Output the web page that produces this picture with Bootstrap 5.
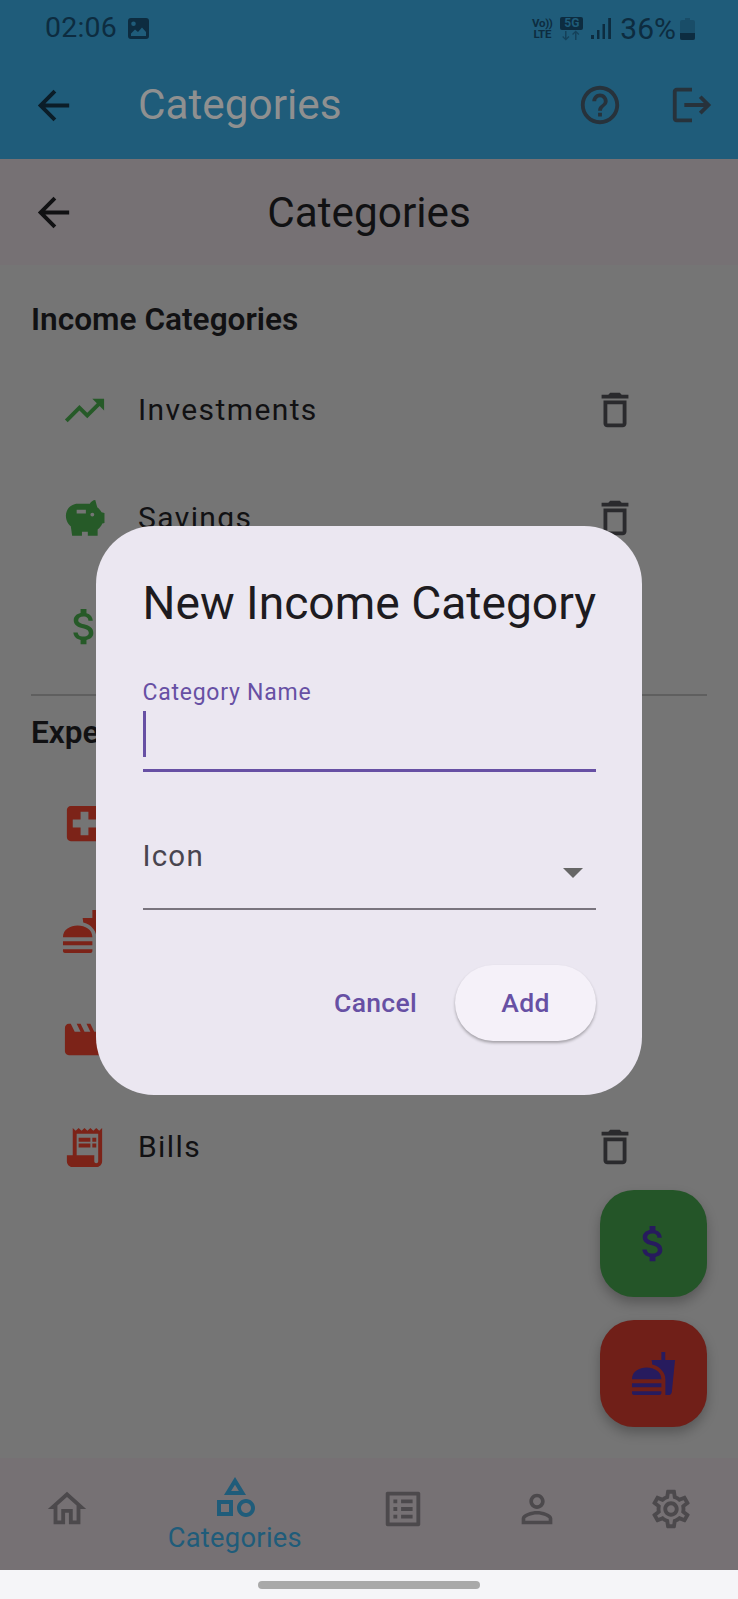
<!DOCTYPE html>
<html lang="en">
<head>
  <meta charset="UTF-8" />
  <meta name="viewport" content="width=device-width, initial-scale=1.0"/>
  <title>Categories</title>
  <link href="https://cdn.jsdelivr.net/npm/bootstrap@5.3.0/dist/css/bootstrap.min.css" rel="stylesheet" />
  <style>
    body { margin: 0; background: #757575; font-family: Roboto, "Noto Sans", sans-serif; }
    svg { fill: currentColor; display: block; flex: none; }
    .phone { width: 738px; height: 1599px; position: relative; overflow: hidden; background: #757575; color: #111113; }

    .app-top { height: 159px; background: #1f5c7a; color: #0b1d28; }
    .status-row { height: 57px; padding: 0 43px 0 45px; color: #0d2c40; }
    .status-time { font-size: 28.5px; line-height: 1; letter-spacing: .2px; }
    .status-img { margin-left: 11px; }
    .status-pct { font-size: 30px; line-height: 1; margin-left: 9px; }
    .volte { font-size: 11.5px; line-height: 11px; font-weight: 700; width: 22px; letter-spacing: -.3px; }
    .five-g { width: 23px; margin-left: 7px; }
    .five-g span { display: block; background: #0d2c40; color: #1f5c7a; font-size: 12px; line-height: 13px; font-weight: 700; text-align: center; border-radius: 2px; }
    .tool-row { height: 102px; padding: 0 0 6px 31px; }
    .top-title { font-size: 42.3px; line-height: 1; color: #8f9090; margin-left: 61px; margin-top: 1px; }
    .tool-ico { color: #27323b; }
    .arrow-ico { margin-left: -1px; }
    .help-ico { margin-left: auto; margin-right: 1px; }
    .logout-ico { margin: 0 23px 0 45px; }

    .sub-bar { height: 106px; background: #767174; padding-left: 31px; position: relative; }
    .sub-title { font-size: 42.3px; line-height: 1; position: absolute; left: 0; right: 0; text-align: center; padding-top: 2px; }

    .cat-list { padding: 36px 31px 0; }
    .cat-head { font-size: 31.6px; line-height: 38px; font-weight: 600; margin-bottom: 17px; white-space: nowrap; }
    .cat-row { height: 108px; padding: 0 69px 0 30px; }
    .cat-name { font-size: 30px; line-height: 1; letter-spacing: 1.4px; margin-left: 30px; color: #111113; }
    .cat-bin { color: #2a2a2d; margin-left: auto; }
    .inc { color: #265a28; }
    .exp { color: #7c2318; }
    .cat-rule { height: 2px; background: #5f5f5f; margin: 14px 0 18px; }

    .fab-stack { position: absolute; left: 600px; top: 1190px; }
    .fab-btn { width: 107px; height: 107px; border-radius: 34px; margin-bottom: 23px; color: #271b5e; box-shadow: 0 6px 12px rgba(0,0,0,.25); }
    .fab-green { background: #245528; }
    .fab-red { background: #701f18; }

    .bot-nav { height: 112px; background: #767174; color: #4c494c; }
    .nav-cell { flex: 2 1 0; height: 100%; padding-top: 28px; }
    .nav-cell.on { flex: 3 1 0; padding-top: 15px; color: #1f5c7a; }
    .nav-label { font-size: 27.3px; line-height: 32px; letter-spacing: .3px; margin-top: 1px; }
    .home-strip { height: 29px; background: #f5f5f8; padding-top: 11px; }
    .home-pill { width: 222px; height: 8px; border-radius: 4px; background: #a9a9a9; }

    .new-dialog { position: absolute; left: 96px; top: 526px; width: 546px; height: 569px; background: #ebe7f1; border-radius: 58px; padding: 46px 46px 0 46.500px; }
    .dlg-title { font-size: 46.2px; line-height: 62px; color: #1d1b20; white-space: nowrap; }
    .field-label { font-size: 23px; line-height: 28px; letter-spacing: .75px; color: #6750a4; margin-top: 45px; }
    .field-line { height: 65px; border-bottom: 3.5px solid #6750a4; padding-top: 4px; }
    .caret-bar { width: 3px; height: 46px; background: #6750a4; }
    .select-line { height: 138px; border-bottom: 2px solid #79747e; color: #49454f; position: relative; padding-top: 66px; }
    .select-label { font-size: 29.5px; line-height: 36px; letter-spacing: 1.2px; }
    .select-arrow { position: absolute; right: 13px; top: 96px; width: 0; height: 0; border-left: 10px solid transparent; border-right: 10px solid transparent; border-top: 10px solid #666; }
    .dlg-actions { margin-top: 55px; }
    .act-btn { font-size: 26.5px; font-weight: 500; color: #6750a4; height: 76px; border: 0; background: none; padding: 0; letter-spacing: .3px; }
    .act-add { width: 141px; border-radius: 38px; background: #f5f1f9; margin-left: 38px; box-shadow: 0 2px 3px rgba(0,0,0,.3); }
  </style>
</head>
<body>
  <svg width="0" height="0" class="position-absolute">
    <symbol id="i-back" viewBox="0 0 24 24"><path d="M20 11H7.83l5.59-5.59L12 4l-8 8 8 8 1.41-1.41L7.83 13H20v-2z"/></symbol>
    <symbol id="i-help" viewBox="0 0 24 24"><path d="M11 18h2v-2h-2v2zm1-16C6.48 2 2 6.48 2 12s4.48 10 10 10 10-4.48 10-10S17.52 2 12 2zm0 18c-4.41 0-8-3.59-8-8s3.59-8 8-8 8 3.59 8 8-3.59 8-8 8zm0-14c-2.21 0-4 1.79-4 4h2c0-1.1.9-2 2-2s2 .9 2 2c0 2-3 1.75-3 5h2c0-2.25 3-2.5 3-5 0-2.21-1.79-4-4-4z"/></symbol>
    <symbol id="i-logout" viewBox="0 0 24 24"><path d="M17 7l-1.41 1.41L18.17 11H8v2h10.17l-2.58 2.58L17 17l5-5zM4 5h8V3H4c-1.1 0-2 .9-2 2v14c0 1.1.9 2 2 2h8v-2H4V5z"/></symbol>
    <symbol id="i-bin" viewBox="0 0 24 24"><path d="M6 19c0 1.1.9 2 2 2h8c1.1 0 2-.9 2-2V7H6v12zM8 9h8v10H8V9zm7.5-5l-1-1h-5l-1 1H5v2h14V4h-3.5z"/></symbol>
    <symbol id="i-trend" viewBox="0 0 24 24"><path d="M16 6l2.29 2.29-4.88 4.88-4-4L2 16.59 3.41 18l6-6 4 4 6.3-6.29L22 12V6z"/></symbol>
    <symbol id="i-pig" viewBox="0 0 24 24"><path fill-rule="evenodd" d="M17.500 2.500c-1.200.1-2.200.8-2.800 2H8.500C5.500 4.500 2.500 7 2.500 10.500c0 2.800 1.300 4.500 2.500 5.500l.7 4.800h5v-2h3v2h5v-3.200c1.100-.8 1.900-1.800 2.400-3l1.100-.3V9.200l-1.500-.4c-.5-1-1.300-1.900-2.200-2.500zM8 7.500h4.700v2H8zM16 9a1 1 0 1 1 0 2 1 1 0 0 1 0-2z"/></symbol>
    <symbol id="i-dollar" viewBox="0 0 24 24"><path d="M11.8 10.9c-2.27-.59-3-1.2-3-2.15 0-1.09 1.01-1.85 2.7-1.85 1.78 0 2.44.85 2.5 2.1h2.21c-.07-1.72-1.12-3.3-3.21-3.81V3h-3v2.16c-1.94.42-3.5 1.68-3.5 3.61 0 2.31 1.91 3.46 4.7 4.13 2.5.6 3 1.48 3 2.41 0 .69-.49 1.79-2.7 1.79-2.06 0-2.87-.92-2.98-2.1h-2.2c.12 2.19 1.76 3.42 3.68 3.83V21h3v-2.15c1.95-.37 3.5-1.5 3.5-3.55 0-2.84-2.43-3.81-4.7-4.4z"/></symbol>
    <symbol id="i-hospital" viewBox="0 0 24 24"><path d="M19 3H5c-1.1 0-1.99.9-1.99 2L3 19c0 1.1.9 2 2 2h14c1.1 0 2-.9 2-2V5c0-1.1-.9-2-2-2zm-1 11h-4v4h-4v-4H6v-4h4V6h4v4h4v4z"/></symbol>
    <symbol id="i-food" viewBox="0 0 24 24"><path d="M18.06 22.99h1.66c.84 0 1.53-.64 1.63-1.46L23 5.05h-5V1h-1.97v4.05h-4.97l.3 2.34c1.71.47 3.31 1.32 4.27 2.26 1.44 1.42 2.43 2.89 2.43 5.29v8.05zM1 21.99V21h15.03v.99c0 .55-.45 1-1.01 1H2.01c-.56 0-1.01-.45-1.01-1zm15.03-7c.01-8-15.03-8-15.03 0h15.03zM1.020 17h15v2h-15z"/></symbol>
    <symbol id="i-movie" viewBox="0 0 24 24"><path d="M18 4l2 4h-3l-2-4h-2l2 4h-3l-2-4H8l2 4H7L5 4H4c-1.1 0-1.99.9-1.99 2L2 18c0 1.1.9 2 2 2h16c1.1 0 2-.9 2-2V4h-4z"/></symbol>
    <symbol id="i-receipt" viewBox="0 0 24 24"><path d="M19.5 3.500L18 2l-1.500 1.500L15 2l-1.500 1.500L12 2l-1.500 1.500L9 2 7.500 3.500 6 2v14H3v3c0 1.660 1.340 3 3 3h12c1.660 0 3-1.340 3-3V2l-1.500 1.500zM19 19c0 .55-.45 1-1 1s-1-.45-1-1v-3H8V5h11v14zM9 7h6v2H9zm7 0h2v2h-2zm-7 3h6v2H9zm7 0h2v2h-2z"/></symbol>
    <symbol id="i-home" viewBox="0 0 24 24"><path d="M12 5.690l5 4.500V18h-2v-6H9v6H7v-7.810l5-4.500M12 3L2 12h3v8h6v-6h2v6h6v-8h3L12 3z"/></symbol>
    <symbol id="i-shapes" viewBox="0 0 24 24"><path d="M12 2l-5.500 9h11L12 2zm0 3.840L13.930 9h-3.870L12 5.840zM17.500 13c-2.490 0-4.500 2.010-4.500 4.500s2.010 4.500 4.500 4.500 4.500-2.010 4.500-4.500-2.010-4.500-4.500-4.500zm0 7c-1.380 0-2.500-1.120-2.500-2.500s1.120-2.500 2.500-2.500 2.500 1.120 2.500 2.500-1.120 2.500-2.500 2.500zM3 21.500h8v-8H3v8zm2-6h4v4H5v-4z"/></symbol>
    <symbol id="i-list" viewBox="0 0 24 24"><path d="M19 5v14H5V5h14m1.100-2H3.900c-.5 0-.9.4-.9.9v16.200c0 .4.4.9.9.9h16.200c.4 0 .9-.5.9-.9V3.900c0-.5-.5-.9-.9-.9zM11 7h6v2h-6V7zm0 4h6v2h-6v-2zm0 4h6v2h-6zM7 7h2v2H7zm0 4h2v2H7zm0 4h2v2H7z"/></symbol>
    <symbol id="i-person" viewBox="0 0 24 24"><path d="M12 5.900c1.160 0 2.100.94 2.100 2.100s-.94 2.100-2.100 2.100S9.900 9.160 9.900 8s.94-2.100 2.100-2.100m0 9c2.970 0 6.100 1.460 6.100 2.100v1.100H5.900V17c0-.64 3.130-2.100 6.100-2.100M12 4C9.790 4 8 5.790 8 8s1.790 4 4 4 4-1.790 4-4-1.790-4-4-4zm0 9c-2.670 0-8 1.340-8 4v3h16v-3c0-2.660-5.330-4-8-4z"/></symbol>
    <symbol id="i-gear" viewBox="0 0 24 24"><path d="M19.430 12.980c.04-.32.07-.64.07-.98 0-.34-.03-.66-.07-.98l2.110-1.650c.19-.15.24-.42.12-.64l-2-3.460c-.09-.16-.26-.25-.44-.25-.06 0-.12.01-.17.03l-2.490 1c-.52-.4-1.080-.73-1.690-.98l-.38-2.650C14.460 2.180 14.250 2 14 2h-4c-.25 0-.46.18-.49.42l-.38 2.650c-.61.25-1.170.59-1.690.98l-2.490-1c-.06-.02-.12-.03-.18-.03-.17 0-.34.09-.43.25l-2 3.460c-.13.22-.07.49.12.64l2.110 1.650c-.04.32-.07.65-.07.98 0 .33.03.66.07.98l-2.110 1.650c-.19.15-.24.42-.12.64l2 3.460c.09.16.26.25.44.25.06 0 .12-.01.17-.03l2.490-1c.52.4 1.080.73 1.690.98l.38 2.650c.03.24.24.42.49.42h4c.25 0 .46-.18.49-.42l.38-2.650c.61-.25 1.170-.59 1.690-.98l2.490 1c.06.02.12.03.18.03.17 0 .34-.09.43-.25l2-3.460c.12-.22.07-.49-.12-.64l-2.110-1.650zm-1.980-1.710c.04.31.05.52.05.73 0 .21-.02.43-.05.73l-.14 1.130.89.7 1.080.84-.7 1.210-1.270-.51-1.040-.42-.9.68c-.43.32-.84.56-1.250.73l-1.060.43-.16 1.130-.2 1.350h-1.400l-.19-1.350-.16-1.130-1.060-.43c-.43-.18-.83-.41-1.230-.71l-.91-.7-1.060.43-1.270.51-.7-1.210 1.080-.84.89-.7-.14-1.130c-.03-.31-.05-.54-.05-.74s.02-.43.05-.73l.14-1.130-.89-.7-1.080-.84.7-1.210 1.270.51 1.040.42.9-.68c.43-.32.84-.56 1.250-.73l1.060-.43.16-1.130.2-1.350h1.390l.19 1.350.16 1.130 1.060.43c.43.18.83.41 1.230.71l.91.7 1.060-.43 1.270-.51.7 1.210-1.070.85-.89.7.14 1.130zM12 8c-2.210 0-4 1.790-4 4s1.790 4 4 4 4-1.790 4-4-1.790-4-4-4zm0 6c-1.100 0-2-.9-2-2s.9-2 2-2 2 .9 2 2-.9 2-2 2z"/></symbol>
  </svg>

  <div class="phone d-flex flex-column">
    <header class="app-top">
      <div class="status-row d-flex align-items-center">
        <span class="status-time">02:06</span>
        <svg class="status-img" width="21" height="21" viewBox="0 0 21 21"><path fill-rule="evenodd" d="M3 0h15a3 3 0 0 1 3 3v15a3 3 0 0 1-3 3H3a3 3 0 0 1-3-3V3a3 3 0 0 1 3-3zM5.500 3.500a2.300 2.300 0 1 0 0 4.600 2.300 2.300 0 0 0 0-4.600zM3 15.500l4-4 3 2.500 4-4.500 4 4.500V18H3z"/></svg>
        <div class="volte ms-auto text-center">Vo))<br>LTE</div>
        <div class="five-g">
          <span>5G</span>
          <svg width="23" height="11" viewBox="0 0 23 11"><path d="M5 1h1.500v7l2-2 .9.9L5.800 10.500 2.200 6.900l.9-.9 1.900 2zM16.500 10H15V3l-2 2-.9-.9L15.700.5l3.600 3.600-.9.9-1.900-2z" opacity=".55"/></svg>
        </div>
        <svg class="ms-2" width="20" height="21" viewBox="0 0 20 21"><path d="M0 17h3v4H0zM6 12h2.500v9H6zM11.500 6H14v15h-2.500zM17.200 0H20v21h-2.800z"/></svg>
        <span class="status-pct">36%</span>
        <svg class="ms-1" width="15" height="22" viewBox="0 0 15 22"><path d="M5 0h5v2h3a2 2 0 0 1 2 2v16a2 2 0 0 1-2 2H2a2 2 0 0 1-2-2V4a2 2 0 0 1 2-2h3z" opacity=".3"/><path d="M0 15h15v5a2 2 0 0 1-2 2H2a2 2 0 0 1-2-2z"/></svg>
      </div>
      <div class="tool-row d-flex align-items-center">
        <svg class="arrow-ico" width="47" height="47"><use href="#i-back"/></svg>
        <span class="top-title">Categories</span>
        <svg class="tool-ico help-ico" width="46" height="46"><use href="#i-help"/></svg>
        <svg class="tool-ico logout-ico" width="46" height="46"><use href="#i-logout"/></svg>
      </div>
    </header>

    <div class="sub-bar d-flex align-items-center">
      <svg class="arrow-ico" width="47" height="47"><use href="#i-back"/></svg>
      <span class="sub-title">Categories</span>
    </div>

    <main class="cat-list flex-grow-1">
      <div class="cat-head">Income Categories</div>
      <div class="cat-row d-flex align-items-center inc">
        <svg width="47" height="47"><use href="#i-trend"/></svg>
        <span class="cat-name">Investments</span>
        <svg class="cat-bin" width="46" height="46"><use href="#i-bin"/></svg>
      </div>
      <div class="cat-row d-flex align-items-center inc">
        <svg width="47" height="47"><use href="#i-pig"/></svg>
        <span class="cat-name">Savings</span>
        <svg class="cat-bin" width="46" height="46"><use href="#i-bin"/></svg>
      </div>
      <div class="cat-row d-flex align-items-center inc">
        <svg width="47" height="47"><use href="#i-dollar"/></svg>
      </div>
      <div class="cat-rule"></div>
      <div class="cat-head">Expense Categories</div>
      <div class="cat-row d-flex align-items-center exp">
        <svg width="47" height="47"><use href="#i-hospital"/></svg>
      </div>
      <div class="cat-row d-flex align-items-center exp">
        <svg width="47" height="47"><use href="#i-food"/></svg>
      </div>
      <div class="cat-row d-flex align-items-center exp">
        <svg width="47" height="47"><use href="#i-movie"/></svg>
      </div>
      <div class="cat-row d-flex align-items-center exp">
        <svg width="47" height="47"><use href="#i-receipt"/></svg>
        <span class="cat-name">Bills</span>
        <svg class="cat-bin" width="46" height="46"><use href="#i-bin"/></svg>
      </div>
    </main>

    <nav class="bot-nav d-flex">
      <div class="nav-cell d-flex flex-column align-items-center"><svg width="46" height="46"><use href="#i-home"/></svg></div>
      <div class="nav-cell on d-flex flex-column align-items-center">
        <svg width="48" height="48"><use href="#i-shapes"/></svg>
        <span class="nav-label">Categories</span>
      </div>
      <div class="nav-cell d-flex flex-column align-items-center"><svg width="46" height="46"><use href="#i-list"/></svg></div>
      <div class="nav-cell d-flex flex-column align-items-center"><svg width="46" height="46"><use href="#i-person"/></svg></div>
      <div class="nav-cell d-flex flex-column align-items-center"><svg width="46" height="46"><use href="#i-gear"/></svg></div>
    </nav>
    <div class="home-strip d-flex justify-content-center"><div class="home-pill"></div></div>

    <div class="fab-stack">
      <div class="fab-btn fab-green d-flex align-items-center justify-content-center"><svg width="47" height="47"><use href="#i-dollar"/></svg></div>
      <div class="fab-btn fab-red d-flex align-items-center justify-content-center"><svg width="47" height="47"><use href="#i-food"/></svg></div>
    </div>

    <div class="new-dialog">
      <div class="dlg-title">New Income Category</div>
      <div class="field-label">Category Name</div>
      <div class="field-line"><div class="caret-bar"></div></div>
      <div class="select-line">
        <div class="select-label">Icon</div>
        <div class="select-arrow"></div>
      </div>
      <div class="dlg-actions d-flex justify-content-end align-items-center">
        <button type="button" class="act-btn">Cancel</button>
        <button type="button" class="act-btn act-add">Add</button>
      </div>
    </div>
  </div>
  <script src="https://cdn.jsdelivr.net/npm/bootstrap@5.3.0/dist/js/bootstrap.bundle.min.js"></script>
</body>
</html>
